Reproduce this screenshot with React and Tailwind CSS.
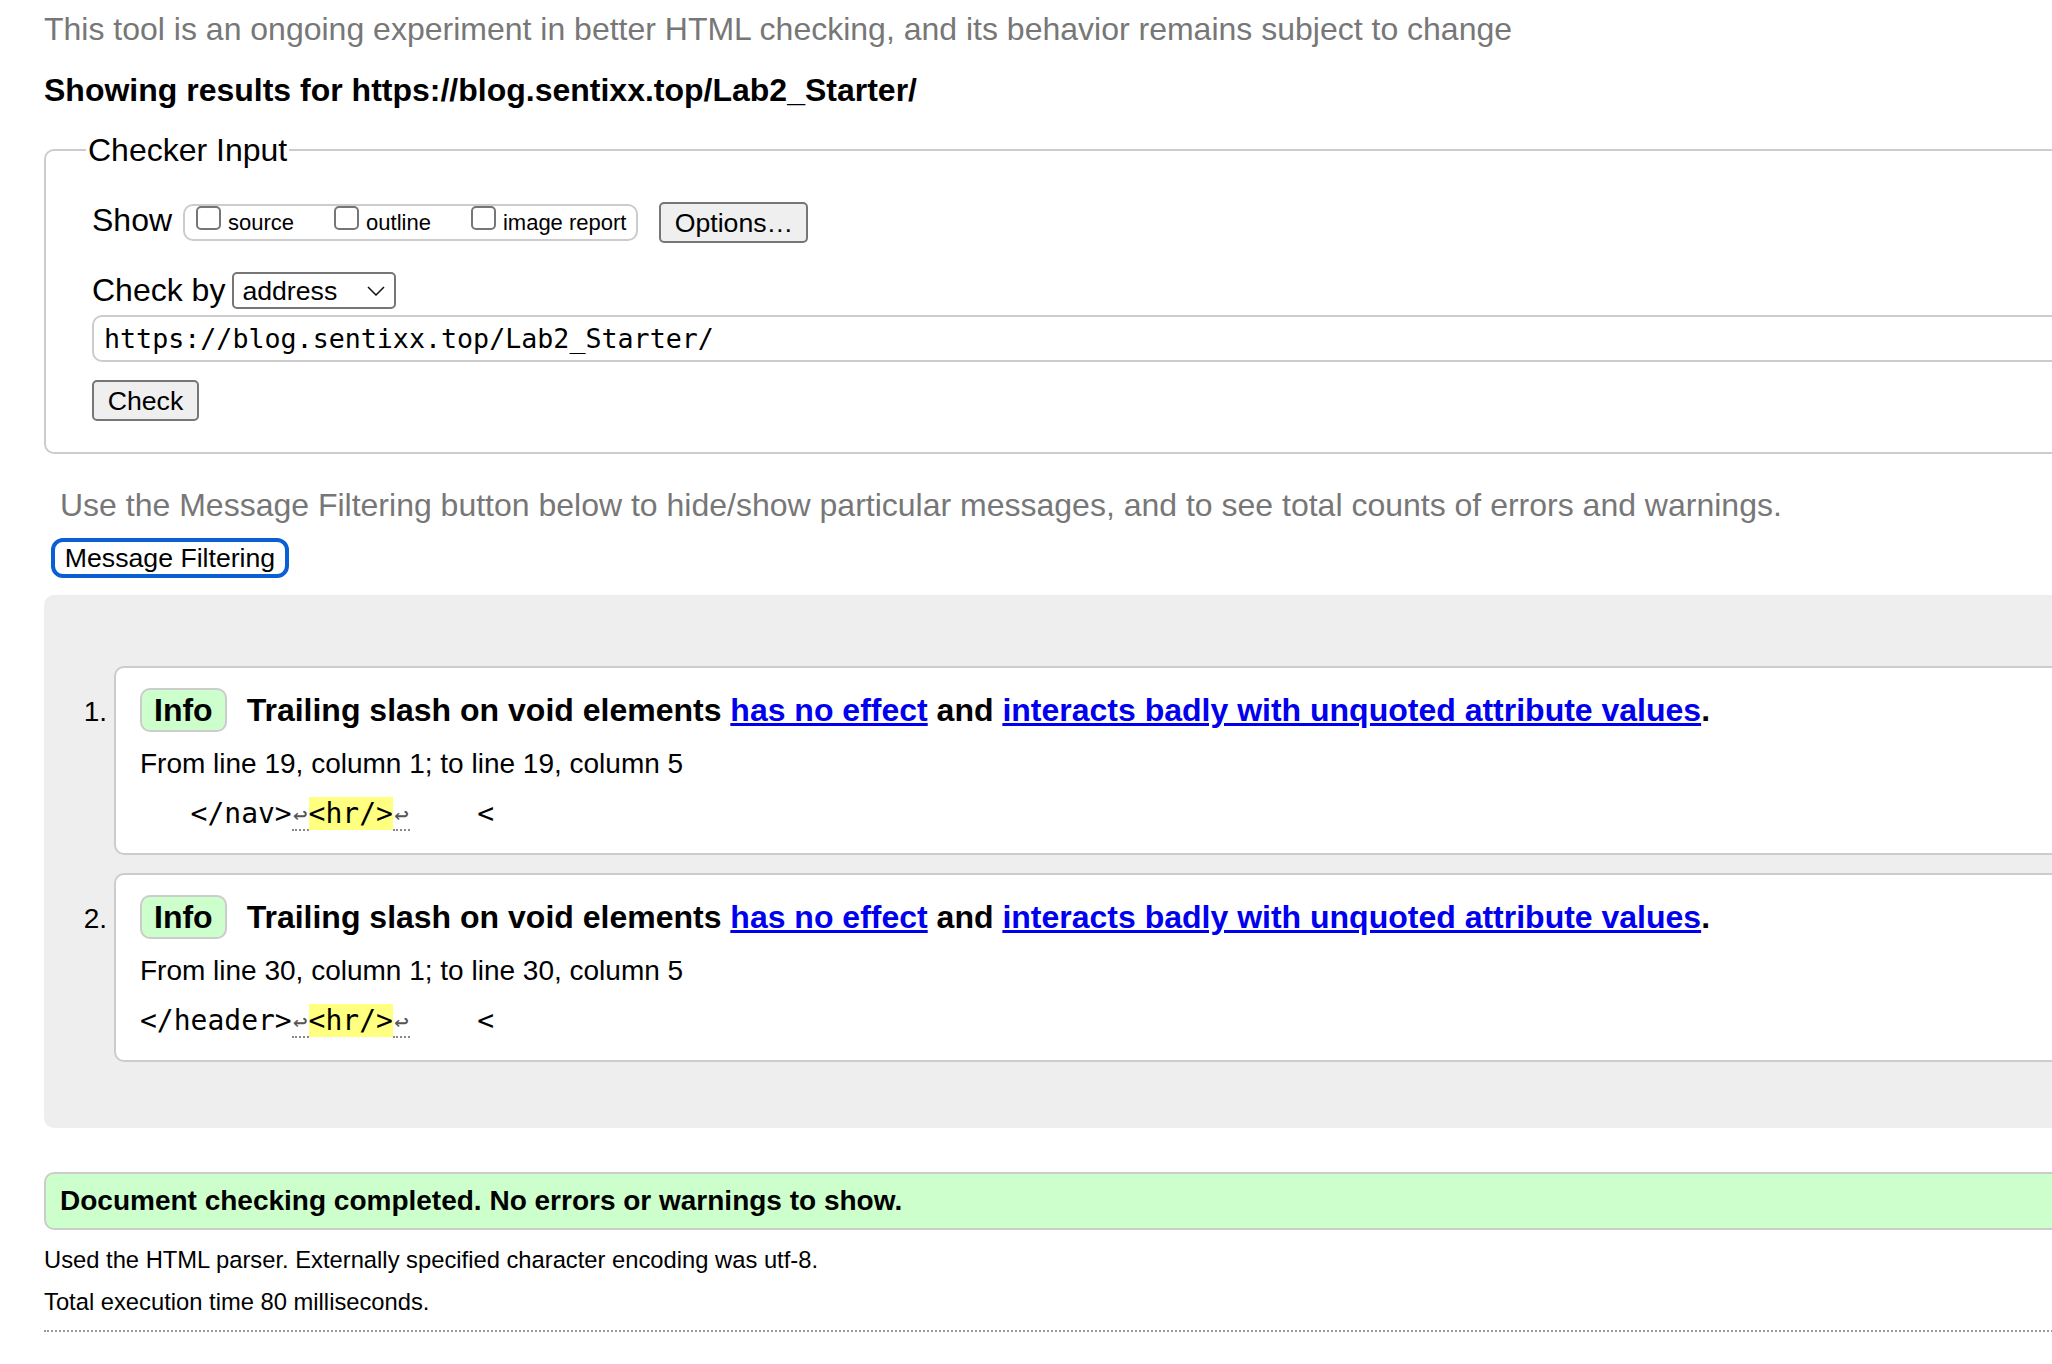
import React from 'react';

const MONO = "font-['DejaVu_Sans_Mono',monospace]";

const MESSAGES = [
  { n: 1, from: 'From line 19, column 1; to line 19, column 5', before: '   </nav>' },
  { n: 2, from: 'From line 30, column 1; to line 30, column 5', before: '</header>' },
];

function Checkbox({ label }) {
  return (
    <span className="flex items-start gap-[7px]">
      <span className="w-[25px] h-[24px] border-2 border-[#767676] rounded-[5px] bg-white" />
      <span className="text-[22px] leading-[34px]">{label}</span>
    </span>
  );
}

function Return() {
  return (
    <span className="inline-block w-[16.9px] text-center text-[24px] leading-[28px] text-[#555] border-b-2 border-dotted border-[#888]">
      ↩
    </span>
  );
}

function Message({ item }) {
  return (
    <li className={`flex items-baseline ${item.n > 1 ? 'mt-[18px]' : ''}`}>
      <span className="w-[63px] text-right text-[28px]">{item.n}.</span>
      <div className="ml-[7px] flex-1 bg-white border-2 border-[#ccc] rounded-[10px] pl-[24px] pt-[20px] pb-[21px]">
        <div className="flex items-center">
          <span className="h-[44px] px-[12px] border-2 border-[#ccc] rounded-[10px] bg-[#ccffcc] text-[32px] leading-[40px] font-bold">
            Info
          </span>
          <p className="ml-[20px] text-[32px] leading-[40px] font-bold">
            Trailing slash on void elements{' '}
            <a href="#" className="text-[#0000ee] underline">has no effect</a> and{' '}
            <a href="#" className="text-[#0000ee] underline">interacts badly with unquoted attribute values</a>.
          </p>
        </div>
        <p className="mt-[14px] text-[28px] leading-[36px]">{item.from}</p>
        <p className={`mt-[14px] text-[28px] leading-[36px] whitespace-pre ${MONO}`}>
          {item.before}
          <Return />
          <span className="bg-[#ffff80]">{'<hr/>'}</span>
          <Return />
          {'    <'}
        </p>
      </div>
    </li>
  );
}

export default function App() {
  return (
    <div className="w-full overflow-x-hidden bg-white text-black font-['Liberation_Sans',Arial,sans-serif]">
      <div className="w-[2200px] pl-[44px] pb-[40px]">
        <p className="pt-[9px] text-[32px] leading-[40px] text-[#777]">
          This tool is an ongoing experiment in better HTML checking, and its behavior remains subject to change
        </p>
        <h2 className="mt-[21px] text-[32px] leading-[40px] font-bold">
          Showing results for https://blog.sentixx.top/Lab2_Starter/
        </h2>

        {/* Checker input */}
        <fieldset className="mt-[20px] border-2 border-[#ccc] rounded-[10px] pl-[40px] pb-[31px]">
          <legend className="px-[2px] text-[32px] leading-[40px]">Checker Input</legend>
          <div className="pl-[6px]">
            <div className="mt-[32px] h-[41px] flex items-center">
              <span className="pb-[6px] text-[32px] leading-[40px]">Show</span>
              <div className="ml-[11px] h-[37px] flex items-start gap-[40px] border-2 border-[#ccc] rounded-[10px] pl-[11px] pr-[10px]">
                <Checkbox label="source" />
                <Checkbox label="outline" />
                <Checkbox label="image report" />
              </div>
              <button className="ml-[21px] w-[149px] h-[41px] border-2 border-[#767676] rounded-[5px] bg-[#efefef] text-[26.67px] leading-[30px]">
                Options…
              </button>
            </div>
            <div className="mt-[29px] h-[37px] flex items-center">
              <span className="pb-[2px] text-[32px] leading-[40px]">Check by</span>
              <div className="ml-[7px] w-[164px] h-[37px] flex items-center justify-between border-2 border-[#767676] rounded-[5px] bg-white pl-[8px] pr-[9px]">
                <span className="text-[26.67px] leading-[30px]">address</span>
                <svg width="18" height="10" viewBox="0 0 18 10">
                  <polyline points="1,1 9,9 17,1" fill="none" stroke="#111" strokeWidth="1.5" />
                </svg>
              </div>
            </div>
            <div className={`mt-[6px] h-[47px] flex items-center border-2 border-[#ccc] rounded-[10px] pl-[10px] text-[26.67px] ${MONO}`}>
              https://blog.sentixx.top/Lab2_Starter/
            </div>
            <button className="mt-[18px] w-[107px] h-[41px] border-2 border-[#767676] rounded-[5px] bg-[#efefef] text-[26.67px] leading-[30px]">
              Check
            </button>
          </div>
        </fieldset>

        <p className="mt-[31px] ml-[16px] text-[32px] leading-[40px] text-[#777]">
          Use the Message Filtering button below to hide/show particular messages, and to see total counts of errors and warnings.
        </p>
        <button className="mt-[13px] ml-[7px] w-[238px] h-[40px] border-4 border-[#0a5fd4] rounded-[12px] bg-white text-[26.67px] leading-[28px]">
          Message Filtering
        </button>

        {/* Results */}
        <div className="mt-[17px] bg-[#eee] rounded-[10px] pt-[71px] pb-[66px]">
          <ol>
            {MESSAGES.map((m) => (
              <Message key={m.n} item={m} />
            ))}
          </ol>
        </div>

        <div className="mt-[44px] h-[58px] flex items-center border-2 border-[#ccc] rounded-[10px] bg-[#ccffcc] pl-[14px] text-[28px] font-bold">
          Document checking completed. No errors or warnings to show.
        </div>
        <p className="mt-[14px] text-[23.75px] leading-[32px]">
          Used the HTML parser. Externally specified character encoding was utf-8.
        </p>
        <p className="mt-[10px] text-[23.75px] leading-[32px]">Total execution time 80 milliseconds.</p>
        <hr className="mt-[12px] border-0 border-t-2 border-dotted border-[#999]" />
      </div>
    </div>
  );
}
